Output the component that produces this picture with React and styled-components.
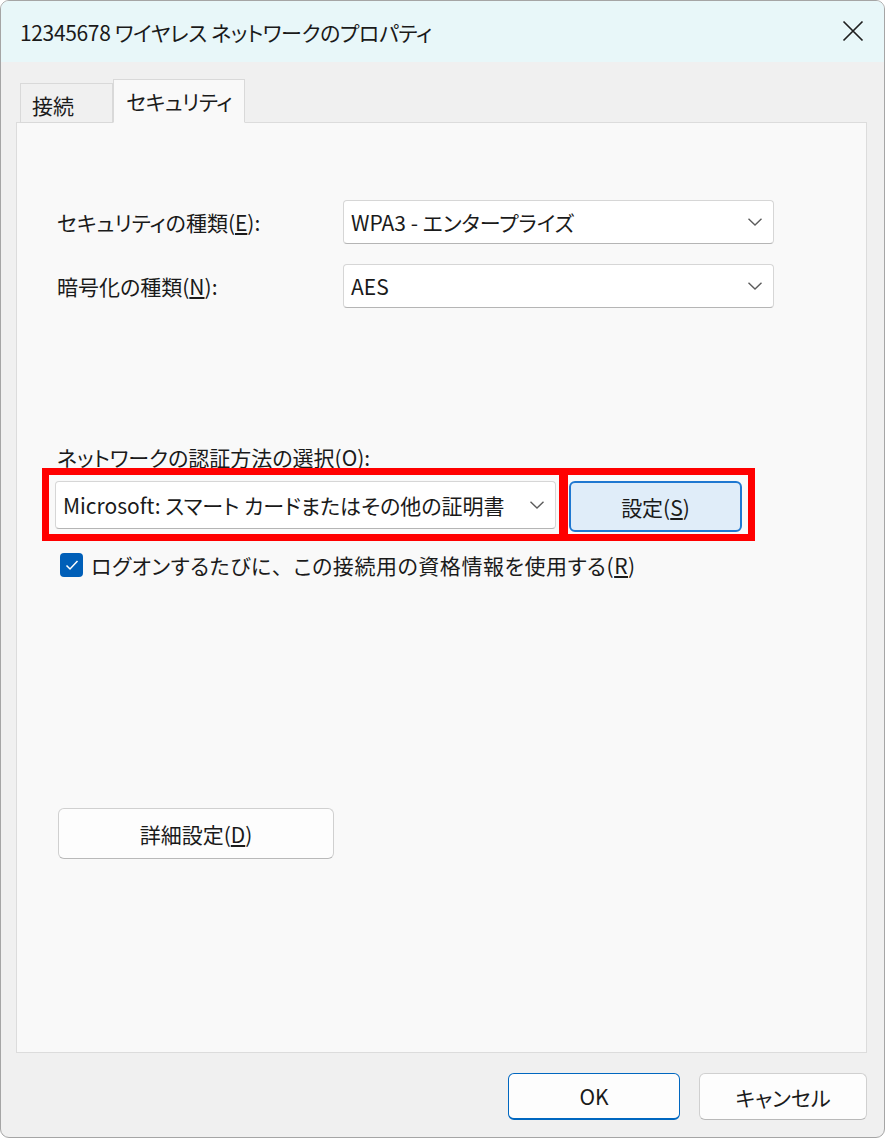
import React from "react";
import styled, { createGlobalStyle } from "styled-components";

const Global = createGlobalStyle`
  html, body { margin: 0; padding: 0; background: #ffffff; }
  body {
    font-family: "Noto Sans CJK JP", "Noto Sans", sans-serif;
    font-feature-settings: "palt";
    color: #1b1b1b;
  }
  * { box-sizing: border-box; }
`;

const Window = styled.div`
  width: 885px;
  height: 1138px;
  border: 1px solid #a5a5a5;
  border-radius: 9px;
  overflow: hidden;
  background: #f0f0f0;
  display: flex;
  flex-direction: column;
`;

const TitleBar = styled.div`
  height: 61px;
  flex: none;
  background: #e8f7f9;
  display: flex;
  align-items: center;
  justify-content: space-between;
  padding: 0 18px 0 19px;
`;

const Title = styled.div`
  font-size: 21px;
  letter-spacing: -0.35px;
  color: #1a1a1a;
`;

const CloseBtn = styled.div`
  width: 26px;
  height: 26px;
  display: flex;
  align-items: center;
  justify-content: center;
  margin-top: -2px;
`;

const Body = styled.div`
  flex: 1;
  display: flex;
  flex-direction: column;
  padding: 17px 17px 0 15px;
`;

const TabStrip = styled.div`
  display: flex;
  align-items: flex-end;
  padding-left: 4px;
  height: 44px;
  position: relative;
  z-index: 1;
  margin-bottom: -1px;
`;

const Tab = styled.div`
  height: ${(p) => (p.$active ? "44px" : "40px")};
  display: flex;
  align-items: center;
  justify-content: ${(p) => (p.$active ? "center" : "flex-start")};
  padding-left: ${(p) => (p.$active ? "0" : "11px")};
  white-space: nowrap;
  font-size: 21px;
  letter-spacing: ${(p) => (p.$active ? "-0.5px" : "0")};
  background: ${(p) => (p.$active ? "#f9f9f9" : "#f0f0f0")};
  border: 1px solid #d9d9d9;
  border-bottom: ${(p) => (p.$active ? "1px solid #f9f9f9" : "1px solid #d9d9d9")};
  width: ${(p) => p.$w}px;
  padding-top: ${(p) => (p.$active ? "0" : "4px")};
`;

const Panel = styled.div`
  height: 931px;
  background: #f9f9f9;
  border: 1px solid #dcdcdc;
  padding: 77px 0 0 40px;
  display: flex;
  flex-direction: column;
`;

const FieldGrid = styled.div`
  display: grid;
  grid-template-columns: 286px 431px;
  row-gap: 20px;
  align-items: center;
`;

const Label = styled.div`
  font-size: 21px;
  color: #1a1a1a;
  white-space: nowrap;
`;

const Select = styled.div`
  height: ${(p) => p.$h || 44}px;
  background: #ffffff;
  border: 1px solid #d6d6d6;
  border-bottom-color: #b5b5b5;
  border-radius: 4px;
  display: flex;
  align-items: center;
  justify-content: space-between;
  padding: 0 10px 0 7px;
  font-size: 21px;
  color: #1a1a1a;
  white-space: nowrap;
  width: ${(p) => (p.$w ? `${p.$w}px` : "auto")};
`;

const Chevron = () => (
  <svg width="16" height="10" viewBox="0 0 16 10">
    <path d="M1.5 1.8 L8 8 L14.5 1.8" fill="none" stroke="#5c5c5c" strokeWidth="1.4" />
  </svg>
);

const AuthLabel = styled(Label)`
  margin-top: 134px;
`;

const AuthRow = styled.div`
  display: flex;
  margin-top: -4px;
  margin-left: -15px;
`;

const RedBox = styled.div`
  border: 7px solid #ff0000;
  padding: ${(p) => p.$pad};
  margin-left: ${(p) => p.$ml || 0}px;
`;

const SettingsBtn = styled.div`
  width: 173px;
  height: 51px;
  background: #e0edf9;
  border: 2px solid #1f78d1;
  border-radius: 6px;
  display: flex;
  align-items: center;
  justify-content: center;
  font-size: 21px;
  color: #1a1a1a;
`;

const CheckRow = styled.div`
  display: flex;
  align-items: center;
  gap: 8px;
  margin-top: 9px;
  margin-left: 3px;
  font-size: 21px;
`;

const CheckLabel = styled.span`
  letter-spacing: 0.55px;
  white-space: nowrap;
`;

const FullWidth = styled.span`
  font-feature-settings: normal;
`;

const CheckBox = styled.div`
  width: 23px;
  height: 24px;
  border-radius: 4px;
  background: #005fb8;
  display: flex;
  align-items: center;
  justify-content: center;
  flex: none;
`;

const PlainBtn = styled.div`
  width: ${(p) => p.$w}px;
  height: ${(p) => p.$h || 47}px;
  background: #fdfdfd;
  border: 1px solid ${(p) => (p.$primary ? "#0067c0" : "#d0d0d0")};
  border-bottom: ${(p) => (p.$primary ? "2px solid #0067c0" : "1px solid #b9b9b9")};
  border-radius: 6px;
  display: flex;
  align-items: center;
  justify-content: center;
  font-size: 21px;
  color: #1a1a1a;
`;

const AdvancedWrap = styled.div`
  margin-top: 228px;
  margin-left: 1px;
`;

const Footer = styled.div`
  display: flex;
  justify-content: flex-end;
  gap: 19px;
  padding-top: 20px;
`;

export default function App() {
  return (
    <>
      <Global />
      <Window>
        <TitleBar>
          <Title>12345678 ワイヤレス ネットワークのプロパティ</Title>
          <CloseBtn>
            <svg width="22" height="22" viewBox="0 0 22 22">
              <path d="M1.5 1.5 L20.5 20.5 M20.5 1.5 L1.5 20.5" stroke="#1f1f1f" strokeWidth="1.7" />
            </svg>
          </CloseBtn>
        </TitleBar>
        <Body>
          <TabStrip>
            <Tab $w={93}>接続</Tab>
            <Tab $active $w={132}>セキュリティ</Tab>
          </TabStrip>
          <Panel>
            <FieldGrid>
              <Label>セキュリティの種類(<u>E</u>):</Label>
              <Select>
                <span>WPA3 - エンタープライズ</span>
                <Chevron />
              </Select>
              <Label>暗号化の種類(<u>N</u>):</Label>
              <Select>
                <span>AES</span>
                <Chevron />
              </Select>
            </FieldGrid>
            <AuthLabel>ネットワークの認証方法の選択(O):</AuthLabel>
            <AuthRow>
              <RedBox $pad="6px 3px 5px 6px">
                <Select $w={501} $h={48}>
                  <span>Microsoft: スマート カードまたはその他の証明書</span>
                  <Chevron />
                </Select>
              </RedBox>
              <RedBox $pad="6px 6px 2px 1px" $ml={-5}>
                <SettingsBtn>
                  <span>設定(<u>S</u>)</span>
                </SettingsBtn>
              </RedBox>
            </AuthRow>
            <CheckRow>
              <CheckBox>
                <svg width="14" height="12" viewBox="0 0 14 12">
                  <path d="M1.5 6.5 L5 10 L12.5 2" fill="none" stroke="#ffffff" strokeWidth="1.5" />
                </svg>
              </CheckBox>
              <CheckLabel>
                ログオンするたびに<FullWidth>、</FullWidth>この接続用の資格情報を使用する(<u>R</u>)
              </CheckLabel>
            </CheckRow>
            <AdvancedWrap>
              <PlainBtn $w={276} $h={51}>
                <span>詳細設定(<u>D</u>)</span>
              </PlainBtn>
            </AdvancedWrap>
          </Panel>
          <Footer>
            <PlainBtn $primary $w={172}>OK</PlainBtn>
            <PlainBtn $w={168}>キャンセル</PlainBtn>
          </Footer>
        </Body>
      </Window>
    </>
  );
}
